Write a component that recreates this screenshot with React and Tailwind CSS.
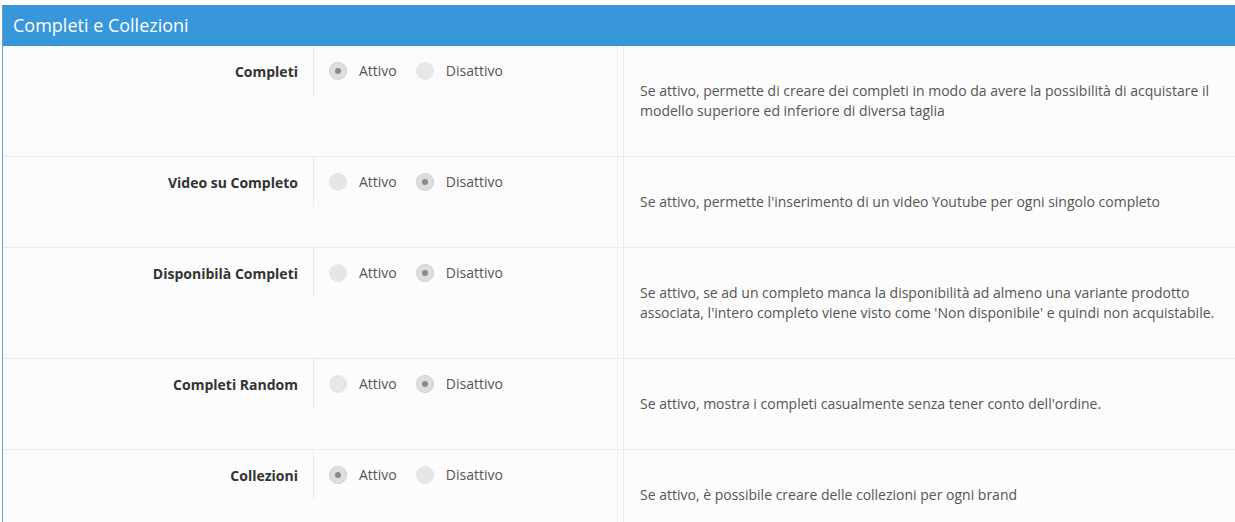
import React from "react";

const rows = [
  {
    label: "Completi",
    active: true,
    desc: "Se attivo, permette di creare dei completi in modo da avere la possibilità di acquistare il modello superiore ed inferiore di diversa taglia",
  },
  {
    label: "Video su Completo",
    active: false,
    desc: "Se attivo, permette l'inserimento di un video Youtube per ogni singolo completo",
  },
  {
    label: "Disponibilà Completi",
    active: false,
    desc: "Se attivo, se ad un completo manca la disponibilità ad almeno una variante prodotto associata, l'intero completo viene visto come 'Non disponibile' e quindi non acquistabile.",
  },
  {
    label: "Completi Random",
    active: false,
    desc: "Se attivo, mostra i completi casualmente senza tener conto dell'ordine.",
  },
  {
    label: "Collezioni",
    active: true,
    desc: "Se attivo, è possibile creare delle collezioni per ogni brand",
  },
];

function Radio({ checked, label }) {
  return (
    <div className="flex items-center">
      <span
        className={
          checked
            ? "flex h-[18px] w-[18px] items-center justify-center rounded-full bg-[#dedede] shadow-[inset_0_0_0_1px_#d4d4d4]"
            : "flex h-[18px] w-[18px] items-center justify-center rounded-full bg-[#e6e6e6]"
        }
      >
        {checked && <span className="h-[6px] w-[6px] rounded-full bg-[#8a8a8a]" />}
      </span>
      <span className="ml-[12px] text-[14px] leading-[20px] text-[#555]">{label}</span>
    </div>
  );
}

export default function App() {
  return (
    <div className="w-[1235px] h-[522px] overflow-hidden bg-white" style={{ fontFamily: '"Open Sans", "Liberation Sans", sans-serif' }}>
      <div className="mt-[5px] ml-[2px] w-[1245px] border-l border-[#6f9fcf]">
        <div className="h-[41px] bg-[#3897db] pl-[10px] flex items-center text-[18px] text-white">
          Completi e Collezioni
        </div>
        {rows.map((r, i) => (
          <div key={i} className="flex bg-[#fcfcfc] border-b border-[#ececec]">
            <div className="flex w-[615px] items-start border-r border-[#f3f3f3]">
              <div className="w-[310px] pr-[15px] pt-[16px] text-right text-[14px] leading-[20px] font-bold text-[#333]">
                {r.label}
              </div>
              <div className="flex h-[50px] flex-1 items-start gap-[19px] border-l border-[#ececec] pl-[15px] pt-[15px]">
                <Radio checked={r.active} label="Attivo" />
                <Radio checked={!r.active} label="Disattivo" />
              </div>
            </div>
            <div className="ml-[5px] flex-1 border-l border-[#e8e8e8] pl-[16px] py-[35px]">
              <p className="w-[590px] text-[14px] leading-[20px] text-[#555]">{r.desc}</p>
            </div>
          </div>
        ))}
      </div>
    </div>
  );
}
